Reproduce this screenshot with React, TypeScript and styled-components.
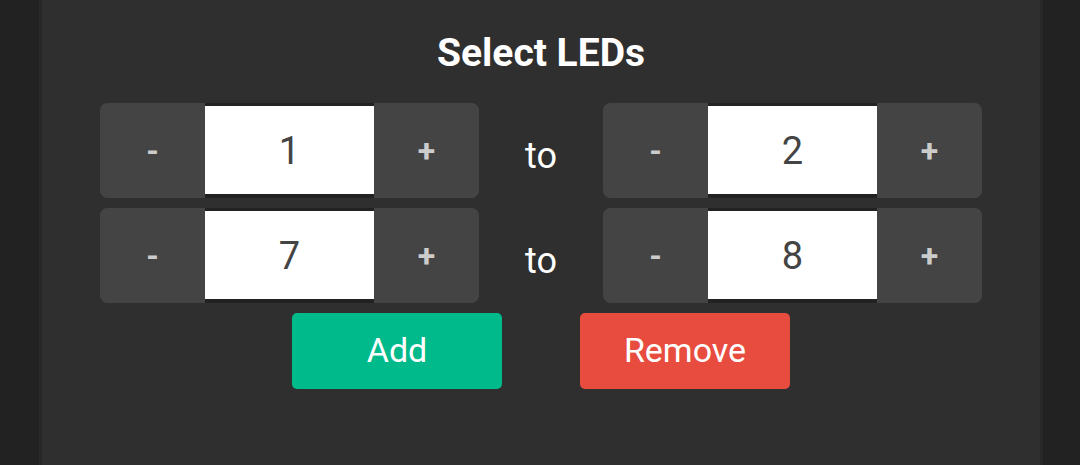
import React from "react";
import styled, { createGlobalStyle } from "styled-components";

const Global = createGlobalStyle`
  html, body { margin: 0; padding: 0; height: 100%; background: #222222; }
  #root { height: 100%; }
  * { box-sizing: border-box; }
`;

const Page = styled.div`
  height: 465px;
  padding: 0 37px 0 39px;
  background: #222222;
  font-family: Roboto, "Liberation Sans", sans-serif;
`;

const Panel = styled.div`
  height: 100%;
  background: #2f2f2f;
  border-left: 3px solid #282828;
  border-right: 3px solid #282828;
  display: flex;
  flex-direction: column;
  align-items: center;
  padding-top: 30px;
`;

const Title = styled.h1`
  margin: 0;
  color: #ffffff;
  font-size: 39px;
  font-weight: 700;
  line-height: 46px;
`;

const Rows = styled.div`
  margin-top: 27px;
  display: flex;
  flex-direction: column;
  gap: 10px;
`;

const Row = styled.div`
  display: flex;
  align-items: center;
`;

const Stepper = styled.div`
  width: 379px;
  height: 95px;
  display: flex;
  border-radius: 8px;
  overflow: hidden;
  background: #444444;
`;

const StepBtn = styled.button`
  width: 105px;
  height: 100%;
  border: none;
  background: #444444;
  color: #cccccc;
  font-family: Roboto, "Liberation Sans", sans-serif;
  font-size: 32px;
  font-weight: 700;
  padding: 0;
  cursor: pointer;
`;

const Value = styled.div`
  width: 169px;
  height: 100%;
  background: #ffffff;
  border-top: 3px solid #222222;
  border-bottom: 4px solid #222222;
  display: flex;
  align-items: center;
  justify-content: center;
  color: #444444;
  font-size: 38px;
  padding-top: 2px;
`;

const To = styled.div`
  width: 124px;
  text-align: center;
  color: #ffffff;
  font-size: 36px;
  padding-top: 10px;
`;

const Actions = styled.div`
  margin-top: 10px;
  display: flex;
  gap: 78px;
`;

const Action = styled.button<{ $color: string }>`
  width: 210px;
  height: 76px;
  border: none;
  border-radius: 5px;
  background: ${(p) => p.$color};
  color: #ffffff;
  font-family: Roboto, "Liberation Sans", sans-serif;
  font-size: 34px;
  padding: 0 0 2px;
  cursor: pointer;
`;

const Step = ({ value }: { value: number }) => (
  <Stepper>
    <StepBtn>-</StepBtn>
    <Value>{value}</Value>
    <StepBtn>+</StepBtn>
  </Stepper>
);

const ranges: [number, number][] = [
  [1, 2],
  [7, 8],
];

export default function App() {
  return (
    <>
      <Global />
      <Page>
        <Panel>
          <Title>Select LEDs</Title>
          <Rows>
            {ranges.map(([a, b], i) => (
              <Row key={i}>
                <Step value={a} />
                <To>to</To>
                <Step value={b} />
              </Row>
            ))}
          </Rows>
          <Actions>
            <Action $color="#00ba8b">Add</Action>
            <Action $color="#e74c3f">Remove</Action>
          </Actions>
        </Panel>
      </Page>
    </>
  );
}
